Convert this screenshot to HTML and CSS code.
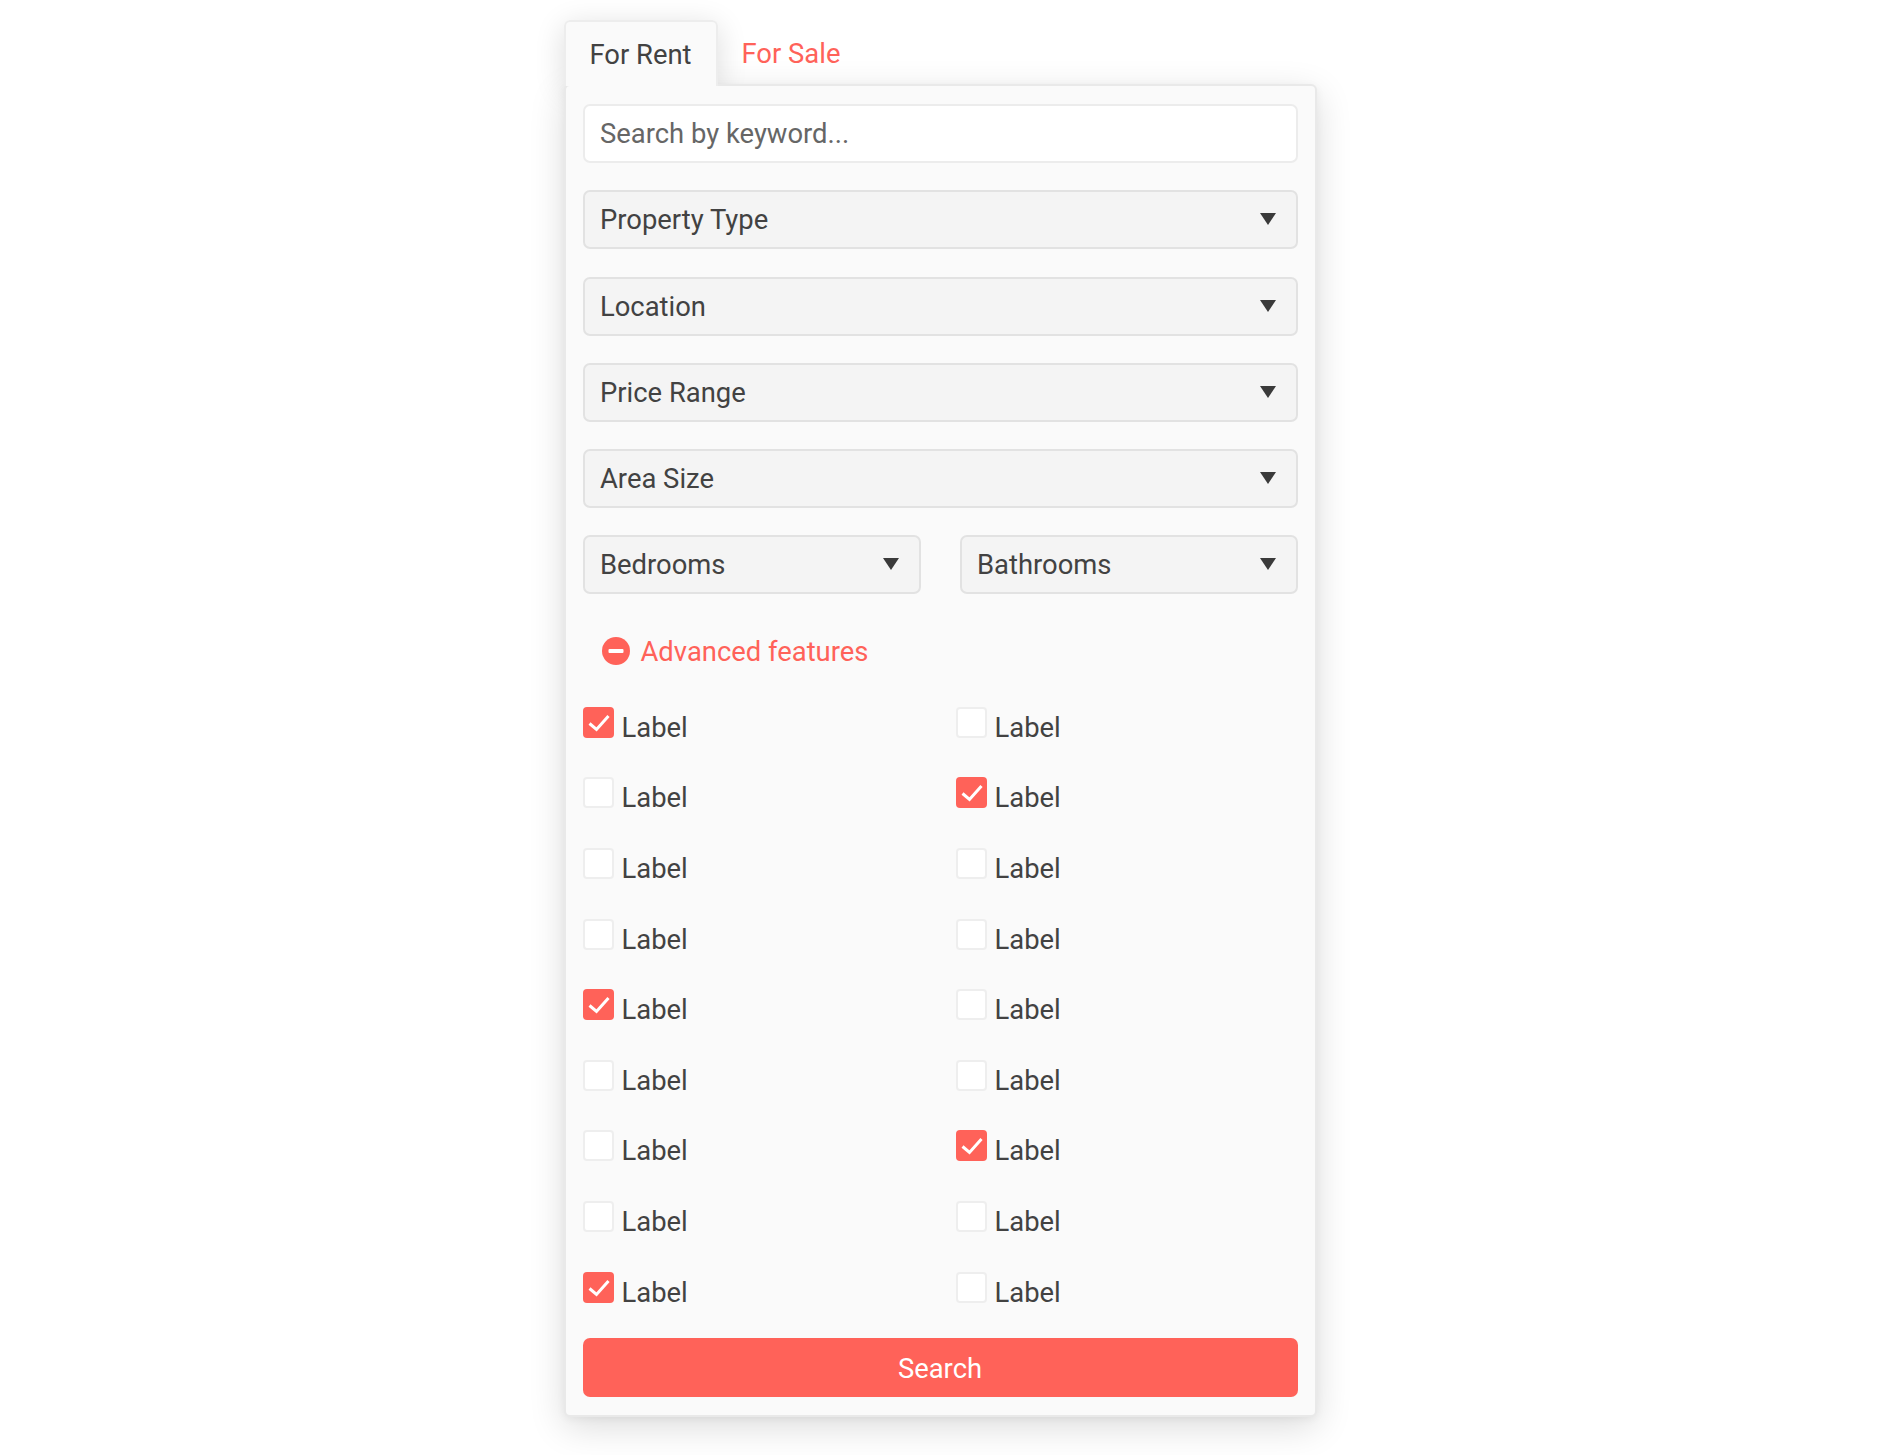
FILE: index.html
```html
<!DOCTYPE html>
<html lang="en">
<head>
  <meta charset="UTF-8" />
  <title>Property search</title>
  <link rel="stylesheet" href="styles.css">
</head>
<body>
  <div class="search-box">
    <div class="tabs">
      <a class="tab active">For Rent</a>
      <a class="tab">For Sale</a>
    </div>

    <form class="panel">
      <input class="field keyword" type="text" placeholder="Search by keyword...">

      <div class="select"><select><option>Property Type</option></select></div>
      <div class="select"><select><option>Location</option></select></div>
      <div class="select"><select><option>Price Range</option></select></div>
      <div class="select"><select><option>Area Size</option></select></div>

      <div class="select-row">
        <div class="select"><select><option>Bedrooms</option></select></div>
        <div class="select"><select><option>Bathrooms</option></select></div>
      </div>

      <div class="advanced">
        <svg class="minus-icon" viewBox="0 0 28 28"><circle cx="14" cy="14" r="14" fill="#ff6259"/><rect x="6.500" y="12" width="15" height="4" rx="1" fill="#fff"/></svg>
        <span>Advanced features</span>
      </div>

      <div class="checks">
        <label class="check"><span class="box on"><svg viewBox="0 0 31 31"><path d="M6.500 16.500l7 6L25.500 9"/></svg></span>Label</label>
        <label class="check"><span class="box"></span>Label</label>
        <label class="check"><span class="box"></span>Label</label>
        <label class="check"><span class="box on"><svg viewBox="0 0 31 31"><path d="M6.500 16.500l7 6L25.500 9"/></svg></span>Label</label>
        <label class="check"><span class="box"></span>Label</label>
        <label class="check"><span class="box"></span>Label</label>
        <label class="check"><span class="box"></span>Label</label>
        <label class="check"><span class="box"></span>Label</label>
        <label class="check"><span class="box on"><svg viewBox="0 0 31 31"><path d="M6.500 16.500l7 6L25.500 9"/></svg></span>Label</label>
        <label class="check"><span class="box"></span>Label</label>
        <label class="check"><span class="box"></span>Label</label>
        <label class="check"><span class="box"></span>Label</label>
        <label class="check"><span class="box"></span>Label</label>
        <label class="check"><span class="box on"><svg viewBox="0 0 31 31"><path d="M6.500 16.500l7 6L25.500 9"/></svg></span>Label</label>
        <label class="check"><span class="box"></span>Label</label>
        <label class="check"><span class="box"></span>Label</label>
        <label class="check"><span class="box on"><svg viewBox="0 0 31 31"><path d="M6.500 16.500l7 6L25.500 9"/></svg></span>Label</label>
        <label class="check"><span class="box"></span>Label</label>
      </div>

      <button class="search-btn" type="button">Search</button>
    </form>
  </div>
</body>
</html>
```

FILE: styles.css
```css
* {
  box-sizing: border-box;
  margin: 0;
  padding: 0;
}

body {
  background: #fff;
  color: #424242;
  font-family: Roboto, sans-serif;
  font-size: 27.4px;
  min-height: 1455px;
}

.search-box {
  width: 753px;
  margin: 0 auto;
  padding-top: 20px;
}

.tabs {
  display: flex;
  height: 66px;
  position: relative;
}

/* tab shadow sits behind the panel, the tab itself sits in front */
.tabs::before {
  content: '';
  position: absolute;
  left: 0;
  top: 0;
  width: 154px;
  height: 66px;
  border-radius: 6px 6px 0 0;
  box-shadow: 0 6px 30px rgba(0, 0, 0, 0.14);
}

.tab {
  display: flex;
  align-items: center;
  position: relative;
  z-index: 2;
  padding: 2px 24px 0;
  color: #ff6259;
  white-space: nowrap;
}

.tab.active {
  width: 154px;
  height: 66px;
  padding: 2px 0 0 24px;
  color: #424242;
  background: #fafafa;
  border: 2px solid #ededed;
  border-bottom: none;
  border-radius: 6px 6px 0 0;
}

.panel {
  position: relative;
  z-index: 1;
  background: #fafafa;
  border: 2px solid #e9e9e9;
  border-radius: 6px;
  box-shadow: 0 10px 36px rgba(0, 0, 0, 0.14), 0 2px 8px rgba(0, 0, 0, 0.05);
  padding: 18px 17px 17px;
  height: 1333px;
  margin-top: -2px;
}

.field,
.select select,
.search-btn {
  width: 100%;
  height: 59px;
  font-family: inherit;
  font-size: 27.4px;
  border-radius: 7px;
}

.field {
  display: block;
  padding: 1px 15.500px 0;
  background: #fff;
  border: 2px solid #ececec;
  color: #424242;
  outline: none;
}

.field::placeholder {
  color: #666;
  opacity: 1;
}

.keyword {
  margin-bottom: 27.300px;
}

.select {
  position: relative;
  margin-bottom: 27.300px;
}

.select select {
  display: block;
  appearance: none;
  padding: 1px 15.500px 0;
  background: #f4f4f4;
  border: 2px solid #e2e2e2;
  color: #424242;
  outline: none;
}

.select::after {
  content: '';
  position: absolute;
  right: 22px;
  top: 23px;
  border-width: 12px 8px 0;
  border-style: solid;
  border-color: #3a3a3a transparent transparent;
}

.select-row {
  display: grid;
  grid-template-columns: 338px 338px;
  justify-content: space-between;
}

.select-row .select {
  margin-bottom: 0;
}

.advanced {
  display: flex;
  align-items: center;
  gap: 11px;
  height: 58px;
  margin-top: 27.300px;
  padding-left: 19px;
  color: #ff6259;
}

.advanced span {
  padding-top: 2px;
}

.minus-icon {
  width: 28px;
  height: 28px;
}

.checks {
  display: grid;
  grid-template-columns: 373px 1fr;
  grid-auto-rows: 70.600px;
  margin-top: 26px;
}

.check {
  display: flex;
  align-items: flex-start;
  gap: 8px;
  line-height: 32px;
  padding-top: 6px;
}

.box {
  width: 31px;
  height: 31px;
  margin-top: -5px;
  background: #fff;
  border: 2px solid #eeeeee;
  border-radius: 4px;
}

.box.on {
  background: #ff6259;
  border: none;
}

.box svg {
  display: block;
  width: 31px;
  height: 31px;
}

.box path {
  fill: none;
  stroke: #fff;
  stroke-width: 3;
}

.search-btn {
  display: block;
  margin-top: -3px;
  padding-top: 2px;
  background: #ff6259;
  border: none;
  color: #fff;
}
```
